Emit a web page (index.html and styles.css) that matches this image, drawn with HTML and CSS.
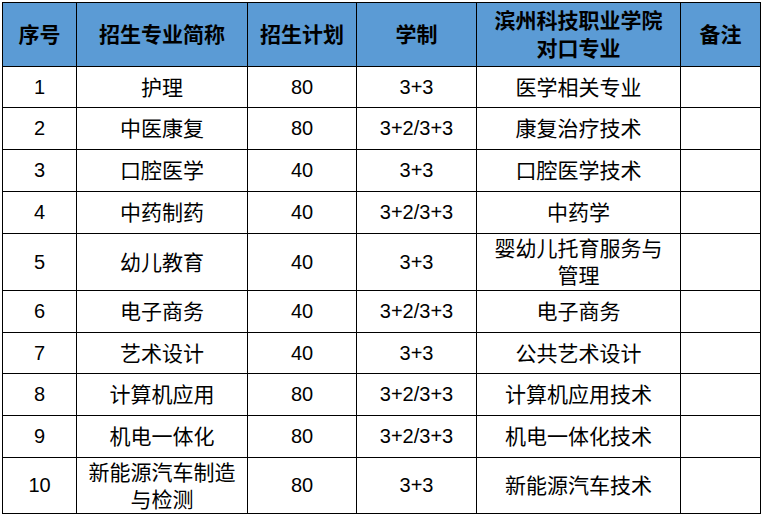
FILE: index.html
```html
<!DOCTYPE html>
<html lang="zh-CN">
<head>
<meta charset="utf-8">
<title>招生专业</title>
<link rel="stylesheet" href="styles.css">
</head>
<body>
<table class="plan">
<colgroup>
<col class="c1"><col class="c2"><col class="c3"><col class="c4"><col class="c5"><col class="c6">
</colgroup>
<thead>
<tr class="head">
<th>序号</th><th>招生专业简称</th><th>招生计划</th><th>学制</th><th>滨州科技职业学院<br>对口专业</th><th>备注</th>
</tr>
</thead>
<tbody>
<tr class="short"><td>1</td><td class="zh">护理</td><td>80</td><td>3+3</td><td class="zh">医学相关专业</td><td></td></tr>
<tr><td>2</td><td class="zh">中医康复</td><td>80</td><td>3+2/3+3</td><td class="zh">康复治疗技术</td><td></td></tr>
<tr><td>3</td><td class="zh">口腔医学</td><td>40</td><td>3+3</td><td class="zh">口腔医学技术</td><td></td></tr>
<tr><td>4</td><td class="zh">中药制药</td><td>40</td><td>3+2/3+3</td><td class="zh">中药学</td><td></td></tr>
<tr class="tall"><td>5</td><td class="zh">幼儿教育</td><td>40</td><td>3+3</td><td class="zh">婴幼儿托育服务与<br>管理</td><td></td></tr>
<tr><td>6</td><td class="zh">电子商务</td><td>40</td><td>3+2/3+3</td><td class="zh">电子商务</td><td></td></tr>
<tr class="short"><td>7</td><td class="zh">艺术设计</td><td>40</td><td>3+3</td><td class="zh">公共艺术设计</td><td></td></tr>
<tr><td>8</td><td class="zh">计算机应用</td><td>80</td><td>3+2/3+3</td><td class="zh">计算机应用技术</td><td></td></tr>
<tr><td>9</td><td class="zh">机电一体化</td><td>80</td><td>3+2/3+3</td><td class="zh">机电一体化技术</td><td></td></tr>
<tr class="tall last"><td>10</td><td class="zh">新能源汽车制造<br>与检测</td><td>80</td><td>3+3</td><td class="zh">新能源汽车技术</td><td></td></tr>
</tbody>
</table>
</body>
</html>
```
FILE: styles.css
```css
html, body {
  margin: 0;
  padding: 0;
  background: #ffffff;
}
body {
  padding: 2px;
  font-family: "Liberation Sans", "Noto Sans CJK SC", sans-serif;
  color: #000000;
}
.plan {
  border-collapse: collapse;
  table-layout: fixed;
  width: 758px;
}
.c1 { width: 74px; }
.c2 { width: 171px; }
.c3 { width: 109px; }
.c4 { width: 120px; }
.c5 { width: 204px; }
.c6 { width: 80px; }
.plan th,
.plan td {
  border: 1px solid #000000;
  padding: 0;
  text-align: center;
  vertical-align: middle;
  font-size: 20px;
  line-height: 27px;
  height: 41px;
  overflow: hidden;
  white-space: nowrap;
}
.plan td.zh {
  font-size: 21px;
}
.plan th {
  background: #5b9bd5;
  font-weight: bold;
  font-size: 21px;
  line-height: 28px;
  height: 63px;
}
.plan tr.short td {
  height: 40px;
}
.plan tr.tall td {
  height: 56px;
}
.plan tr.tall.last td {
  height: 55px;
}
```
